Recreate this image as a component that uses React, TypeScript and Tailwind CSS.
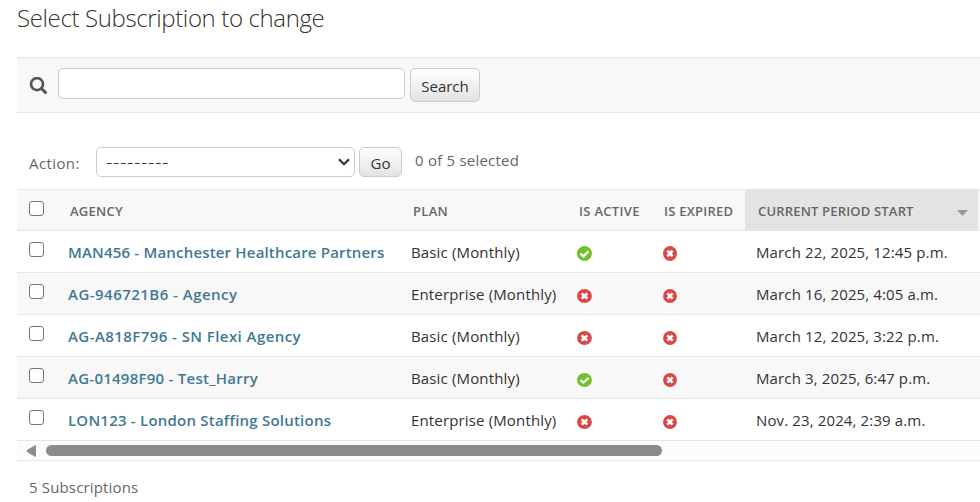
import React from 'react';

type Row = { agency: string; spacing: string; plan: string; active: boolean; date: string };

const rows: Row[] = [
  { agency: 'MAN456 - Manchester Healthcare Partners', spacing: 'tracking-[0.18px]', plan: 'Basic (Monthly)', active: true, date: 'March 22, 2025, 12:45 p.m.' },
  { agency: 'AG-946721B6 - Agency', spacing: 'tracking-[0.47px]', plan: 'Enterprise (Monthly)', active: false, date: 'March 16, 2025, 4:05 a.m.' },
  { agency: 'AG-A818F796 - SN Flexi Agency', spacing: 'tracking-[0.43px]', plan: 'Basic (Monthly)', active: false, date: 'March 12, 2025, 3:22 p.m.' },
  { agency: 'AG-01498F90 - Test_Harry', spacing: 'tracking-[0.25px]', plan: 'Basic (Monthly)', active: true, date: 'March 3, 2025, 6:47 p.m.' },
  { agency: 'LON123 - London Staffing Solutions', spacing: 'tracking-[0.22px]', plan: 'Enterprise (Monthly)', active: false, date: 'Nov. 23, 2024, 2:39 a.m.' },
];

const columns = 'grid grid-cols-[51px_343px_166px_86px_82px_234px] w-[963px]';

function StatusIcon({ ok, size }: { ok: boolean; size: string }) {
  return (
    <svg viewBox="0 0 15 15" preserveAspectRatio="none" className={'block ' + size}>
      <circle cx="7.5" cy="7.5" r="7.4" fill={ok ? '#70bf2b' : '#dd4646'} />
      {ok ? (
        <path d="M3.5 7.6 L6.5 10.3 L11.5 5.3" fill="none" stroke="#fff" strokeWidth="2.3" />
      ) : (
        <path d="M4.7 4.7 L10.3 10.3 M10.3 4.7 L4.7 10.3" fill="none" stroke="#fff" strokeWidth="2.7" />
      )}
    </svg>
  );
}

function Checkbox() {
  return <span className="ml-3 block size-[15px] rounded-[3px] border border-[#767676] bg-white" />;
}

export default function App() {
  return (
    <div className="h-[502px] w-[980px] overflow-hidden bg-white pl-[17px] font-['Open_Sans',sans-serif] text-[15px] text-[#333]">
      <h1 className="flex h-[57px] items-start whitespace-nowrap pt-[1px] text-[24px] leading-[34px] font-light tracking-[-0.37px]">
        <span>Select Subscription to change</span>
      </h1>

      <div className="flex h-[56px] items-start border-y border-[#e6e6e6] bg-[#f8f8f8] pt-[10px]">
        <svg width="18" height="18" viewBox="0 0 18 18" className="mt-[9px] ml-[12px] block" fill="none" stroke="#555">
          <circle cx="8" cy="7.1" r="6" strokeWidth="2.7" />
          <path d="M12.4 11.5 L16.4 15.4" strokeWidth="3" strokeLinecap="round" />
        </svg>
        <span className="ml-[11px] block h-[31px] w-[347px] rounded-[5px] border border-[#ccc] bg-white" />
        <button className="ml-[5px] flex h-[34px] w-[70px] items-center justify-center rounded-[5px] border border-[#ccc] bg-gradient-to-b from-white to-[#e3e3e3] pt-[2px]">
          <span>Search</span>
        </button>
      </div>

      <div className="flex h-[76px] items-start pt-[34px] pl-3 text-[#666]">
        <span className="mt-[6px] w-[67px] leading-5 tracking-[0.4px]">Action:</span>
        <span className="flex h-[30px] w-[259px] items-center justify-between rounded-[5px] border border-[#ccc] bg-white pr-[4px] pl-[9px] text-[#333]">
          <span className="text-[20px] leading-5 font-light tracking-[0.55px]">---------</span>
          <svg width="12" height="8" viewBox="0 0 12 8" fill="none" stroke="#333" strokeWidth="2.2">
            <path d="M1 1.2 L6 6.2 L11 1.2" />
          </svg>
        </span>
        <button className="ml-1 flex h-[30px] w-[43px] items-center justify-center rounded-[5px] border border-[#ccc] bg-gradient-to-b from-white to-[#e3e3e3] pt-[2px] text-[#333]">
          Go
        </button>
        <span className="mt-[3px] ml-[13px] leading-5 tracking-[0.22px]">0 of 5 selected</span>
      </div>

      <div className="border-b border-[#e6e6e6]">
        <div className={columns + ' h-[42px] border-y border-[#e6e6e6] bg-[#f8f8f8] text-[13px] leading-[42px] font-semibold whitespace-nowrap text-[#666]'}>
          <div className="pt-[11px]"><Checkbox /></div>
          <div className="pl-[2px] tracking-[0.25px]"><span>AGENCY</span></div>
          <div className="pl-[2px] tracking-[0.3px]"><span>PLAN</span></div>
          <div className="pl-[2px] tracking-[0.3px]"><span>IS ACTIVE</span></div>
          <div className="pl-px tracking-[0.25px]"><span>IS EXPIRED</span></div>
          <div className="flex h-10 w-[233px] items-center justify-between bg-[#e3e3e3] pr-[10px] pl-[13px] tracking-[0.18px]">
            <span className="pt-[2px]">CURRENT PERIOD START</span>
            <svg width="11" height="6" viewBox="0 0 11 6" className="mt-[5px]"><path d="M0 0H11L5.5 6Z" fill="#999" /></svg>
          </div>
        </div>
        {rows.map((r, i) => (
          <div key={r.agency} className={columns + ' h-[42px] border-b border-[#e6e6e6] leading-[42px] whitespace-nowrap ' + (i % 2 ? 'bg-[#f8f8f8]' : 'bg-white')}>
            <div className="pt-[11px]"><Checkbox /></div>
            <div className="font-semibold text-[#417893]"><span className={r.spacing}>{r.agency}</span></div>
            <div><span className="tracking-[0.15px]">{r.plan}</span></div>
            <div className={i === 0 ? 'pt-[15px]' : 'pt-[16px]'}><StatusIcon ok={r.active} size={i === 0 ? 'h-[15px] w-[15px]' : 'h-[14px] w-[15px]'} /></div>
            <div className={i === 0 ? 'pt-[15px]' : 'pt-[16px]'}><StatusIcon ok={false} size={i === 0 ? 'h-[15px] w-[14px]' : 'h-[14px] w-[14px]'} /></div>
            <div className="pl-[11px]"><span className="tracking-[0.13px]">{r.date}</span></div>
          </div>
        ))}
        <div className="flex h-[19px] items-center bg-[#fcfcfc] pl-[9px]">
          <svg width="10" height="12" viewBox="0 0 10 12"><path d="M10 .8V11.2Q10 12 9 11.8L1 7Q0 6 1 5L9 .2Q10 0 10 .8Z" fill="#8b8b8b" /></svg>
          <span className="ml-[10px] block h-[11px] w-[616px] rounded-full bg-[#8b8b8b]" />
        </div>
      </div>

      <p className="pt-[16px] pl-3 leading-5 tracking-[0.16px] text-[#666]"><span>5 Subscriptions</span></p>
    </div>
  );
}
